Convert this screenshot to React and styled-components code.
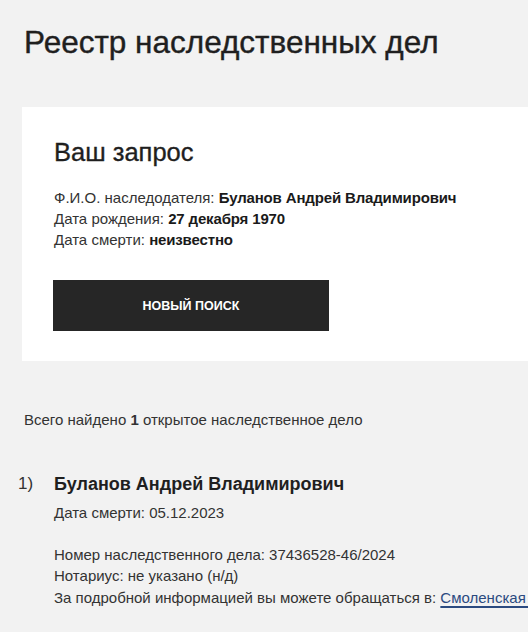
import React from 'react';
import styled, { createGlobalStyle } from 'styled-components';

const GlobalStyle = createGlobalStyle`
  html, body {
    margin: 0;
    padding: 0;
    background: #f2f2f2;
    color: #222;
    font-family: "Liberation Sans", Arial, sans-serif;
  }
`;

const Page = styled.div`
  padding: 20px 0 0 22px;
  width: 528px;
  box-sizing: border-box;
  overflow: hidden;
`;

const Title = styled.h1`
  margin: 0 0 0 2px;
  font-size: 31.5px;
  line-height: 44px;
  font-weight: 400;
  color: #1f1f1f;
  -webkit-text-stroke: 0.4px #1f1f1f;
`;

const Card = styled.section`
  margin-top: 43px;
  background: #fff;
  width: 560px;
  padding: 30px 0 30px 32px;
  box-sizing: border-box;
`;

const CardTitle = styled.h2`
  margin: 0 0 20px;
  font-size: 25.5px;
  line-height: 30px;
  font-weight: 400;
  color: #1f1f1f;
  -webkit-text-stroke: 0.35px #1f1f1f;
`;

const InfoLine = styled.div`
  font-size: 15px;
  line-height: 21px;
  color: #333;

  b {
    font-weight: 700;
    color: #1a1a1a;
    letter-spacing: -0.15px;
  }
`;

const Button = styled.button`
  display: block;
  margin: 30px 0 0 -1px;
  width: 276px;
  height: 51px;
  border: none;
  background: #262626;
  color: #fff;
  font-family: inherit;
  font-size: 12.5px;
  font-weight: 700;
  text-transform: uppercase;
  cursor: pointer;
`;

const Summary = styled.p`
  margin: 49px 0 0 2px;
  font-size: 15px;
  line-height: 20px;
  color: #333;
`;

const Result = styled.div`
  margin-top: 42px;
  display: grid;
  grid-template-columns: 36px 1fr;
  margin-left: -4px;
`;

const Num = styled.div`
  font-size: 17px;
  line-height: 24px;
  color: #333;
`;

const ResultBody = styled.div`
  white-space: nowrap;
`;

const Name = styled.div`
  font-size: 18px;
  line-height: 24px;
  font-weight: 700;
  color: #1f1f1f;
`;

const Detail = styled.div`
  font-size: 15px;
  line-height: 21.5px;
  color: #333;
  margin-top: ${p => p.$gap || 0}px;
`;

const Link = styled.a`
  color: #2b4a80;
  text-decoration: underline;
  text-decoration-thickness: 1.5px;
  text-underline-offset: 3px;
`;

export default function App() {
  return (
    <>
      <GlobalStyle />
      <Page>
        <Title>Реестр наследственных дел</Title>
        <Card>
          <CardTitle>Ваш запрос</CardTitle>
          <InfoLine>Ф.И.О. наследодателя: <b>Буланов Андрей Владимирович</b></InfoLine>
          <InfoLine>Дата рождения: <b>27 декабря 1970</b></InfoLine>
          <InfoLine>Дата смерти: <b>неизвестно</b></InfoLine>
          <Button>Новый поиск</Button>
        </Card>
        <Summary>Всего найдено <b>1</b> открытое наследственное дело</Summary>
        <Result>
          <Num>1)</Num>
          <ResultBody>
            <Name>Буланов Андрей Владимирович</Name>
            <Detail $gap={6}>Дата смерти: 05.12.2023</Detail>
            <Detail $gap={20}>Номер наследственного дела: 37436528-46/2024</Detail>
            <Detail>Нотариус: не указано (н/д)</Detail>
            <Detail>За подробной информацией вы можете обращаться в: <Link href="#">Смоленская областная нотариальная палата</Link></Detail>
          </ResultBody>
        </Result>
      </Page>
    </>
  );
}
